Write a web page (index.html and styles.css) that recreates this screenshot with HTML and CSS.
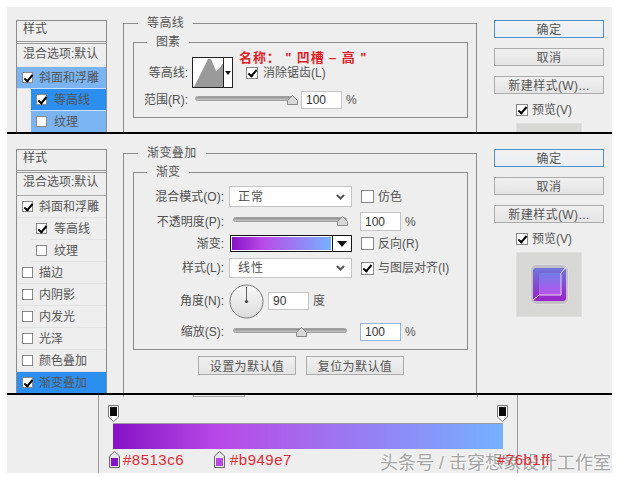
FILE: index.html
```html
<!DOCTYPE html>
<html lang="zh-CN">
<head>
    <meta charset="UTF-8">
    <title>渐变叠加</title>
    <link rel="stylesheet" href="styles.css">
</head>
<body>
    <!-- 等高线 -->
    <div class="strip strip-a">
        <div class="side">
            <div class="side-title">样式</div>
            <div class="side-row plain">混合选项:默认</div>
            <div class="side-row soft"><span class="check on"></span>斜面和浮雕</div>
            <div class="side-row sub active"><span class="check on"></span>等高线</div>
            <div class="side-row sub soft"><span class="check"></span>纹理</div>
        </div>
        <fieldset class="group">
            <legend>等高线</legend>
            <fieldset class="inner">
                <legend>图素</legend>
                <div class="note">名称： " 凹槽 – 高 "</div>
                <div class="row row-contour">
                    <label class="name name-a">等高线:</label>
                    <div class="contour">
                        <svg class="contour-pic" width="30" height="29" viewBox="0 0 30 29">
                            <path d="M1 29 L15 1 L18 1 L23 13 L27 10 L29 6 L30 6 L30 29 Z" fill="#9a9a9a"/>
                        </svg>
                        <div class="contour-arrow"><span class="tri"></span></div>
                    </div>
                    <span class="opt opt-a"><span class="check on"></span>消除锯齿(L)</span>
                </div>
                <div class="row row-range">
                    <label class="name name-a">范围(R):</label>
                    <div class="slider slider-a">
                        <svg class="thumb" style="left: 93%" width="11" height="10" viewBox="0 0 11 10"><path d="M5.5 .5 L10.5 5.5 V9.5 H.5 V5.5 Z" fill="#d8d8d8" stroke="#888"/></svg>
                    </div>
                    <div class="num num-a">100</div>
                    <span class="pct">%</span>
                </div>
            </fieldset>
        </fieldset>
        <div class="right">
            <div class="btn main-btn">确定</div>
            <div class="btn">取消</div>
            <div class="btn">新建样式(W)...</div>
            <div class="preview-opt"><span class="check on"></span>预览(V)</div>
            <div class="preview"></div>
        </div>
    </div>
    <div class="rule"></div>

    <!-- 渐变叠加 -->
    <div class="strip strip-b">
        <div class="side">
            <div class="side-title">样式</div>
            <div class="side-row plain">混合选项:默认</div>
            <div class="side-row"><span class="check on"></span>斜面和浮雕</div>
            <div class="side-row sub"><span class="check on"></span>等高线</div>
            <div class="side-row sub"><span class="check"></span>纹理</div>
            <div class="side-row"><span class="check"></span>描边</div>
            <div class="side-row"><span class="check"></span>内阴影</div>
            <div class="side-row"><span class="check"></span>内发光</div>
            <div class="side-row"><span class="check"></span>光泽</div>
            <div class="side-row"><span class="check"></span>颜色叠加</div>
            <div class="side-row active"><span class="check on"></span>渐变叠加</div>
        </div>
        <fieldset class="group">
            <legend>渐变叠加</legend>
            <fieldset class="inner inner-b">
                <legend>渐变</legend>
                <div class="row row-1">
                    <label class="name">混合模式(O):</label>
                    <div class="select">正常<svg class="chev" width="9" height="6" viewBox="0 0 9 6"><path d="M1 1 L4.5 4.5 L8 1" fill="none" stroke="#555" stroke-width="2"/></svg></div>
                    <span class="opt"><span class="check"></span>仿色</span>
                </div>
                <div class="row row-2">
                    <label class="name">不透明度(P):</label>
                    <div class="slider">
                        <svg class="thumb" style="left: 92%" width="11" height="10" viewBox="0 0 11 10"><path d="M5.5 .5 L10.5 5.5 V9.5 H.5 V5.5 Z" fill="#d8d8d8" stroke="#888"/></svg>
                    </div>
                    <div class="num">100</div>
                    <span class="pct">%</span>
                </div>
                <div class="row row-3">
                    <label class="name">渐变:</label>
                    <div class="grad-pick">
                        <div class="grad-swatch"></div>
                        <div class="grad-arrow"><span class="tri tri-big"></span></div>
                    </div>
                    <span class="opt"><span class="check"></span>反向(R)</span>
                </div>
                <div class="row row-4">
                    <label class="name">样式(L):</label>
                    <div class="select">线性<svg class="chev" width="9" height="6" viewBox="0 0 9 6"><path d="M1 1 L4.5 4.5 L8 1" fill="none" stroke="#555" stroke-width="2"/></svg></div>
                    <span class="opt"><span class="check on"></span>与图层对齐(I)</span>
                </div>
                <div class="row row-5">
                    <label class="name">角度(N):</label>
                    <svg class="dial" width="35" height="35" viewBox="0 0 35 35">
                        <defs>
                            <linearGradient id="dial-fill" x1="0" y1="0" x2="0" y2="1">
                                <stop offset="0" stop-color="#f8f8f8"/>
                                <stop offset="1" stop-color="#dcdcdc"/>
                            </linearGradient>
                        </defs>
                        <circle cx="17.5" cy="17.5" r="16.5" fill="url(#dial-fill)" stroke="#777"/>
                        <path d="M17.5 3 V17" stroke="#666" stroke-width="1"/>
                        <circle cx="17.5" cy="17.5" r="1.6" fill="#444"/>
                    </svg>
                    <div class="num num-angle">90</div>
                    <span class="pct">度</span>
                </div>
                <div class="row row-6">
                    <label class="name">缩放(S):</label>
                    <div class="slider">
                        <svg class="thumb" style="left: 55%" width="11" height="10" viewBox="0 0 11 10"><path d="M5.5 .5 L10.5 5.5 V9.5 H.5 V5.5 Z" fill="#d8d8d8" stroke="#888"/></svg>
                    </div>
                    <div class="num num-focus">100</div>
                    <span class="pct">%</span>
                </div>
            </fieldset>
            <div class="defaults">
                <div class="btn">设置为默认值</div>
                <div class="btn">复位为默认值</div>
            </div>
        </fieldset>
        <div class="right">
            <div class="btn main-btn">确定</div>
            <div class="btn">取消</div>
            <div class="btn">新建样式(W)...</div>
            <div class="preview-opt"><span class="check on"></span>预览(V)</div>
            <div class="preview">
                <svg width="39" height="41" viewBox="0 0 39 41">
                    <defs>
                        <linearGradient id="face" x1="0" y1="0" x2="0" y2="1">
                            <stop offset="0" stop-color="#6f7ce6"/>
                            <stop offset="1" stop-color="#bd52ee"/>
                        </linearGradient>
                        <linearGradient id="rim" x1="0" y1="0" x2="0" y2="1">
                            <stop offset="0" stop-color="#7076da"/>
                            <stop offset="1" stop-color="#9a22c8"/>
                        </linearGradient>
                    </defs>
                    <rect x=".5" y=".5" width="38" height="40" rx="6" fill="#c4c0c8" stroke="#dedede"/>
                    <rect x="3" y="4" width="33" height="33" rx="3" fill="url(#rim)"/>
                    <rect x="9" y="9" width="22" height="22" fill="url(#face)"/>
                    <path d="M31 9 V31 H9" fill="none" stroke="#e6d4f6" stroke-width="1"/>
                    <path d="M3 36 L9 31 M31 9 L37 2" stroke="#eee" stroke-width="1"/>
                </svg>
            </div>
        </div>
    </div>
    <div class="rule"></div>

    <!-- 色标 -->
    <div class="strip strip-c">
        <span class="stub stub-1"></span>
        <span class="stub stub-2"></span>
        <span class="stub stub-3"></span>
        <div class="stage">
            <div class="stops-top">
                <svg width="11" height="17" viewBox="0 0 11 17"><path d="M.5 .5 H10.5 V12 L5.5 16.5 L.5 12 Z" fill="#fff" stroke="#777"/><rect x="2" y="2" width="7" height="9" fill="#0a0a0a"/></svg>
                <svg width="11" height="17" viewBox="0 0 11 17"><path d="M.5 .5 H10.5 V12 L5.5 16.5 L.5 12 Z" fill="#fff" stroke="#777"/><rect x="2" y="2" width="7" height="9" fill="#0a0a0a"/></svg>
            </div>
            <div class="bar"></div>
            <div class="stops-bottom">
                <div class="stop stop-1">
                    <svg width="11" height="17" viewBox="0 0 11 17"><path d="M.5 16.5 H10.5 V5 L5.5 .5 L.5 5 Z" fill="#e8e8e8" stroke="#666"/><rect x="2" y="7" width="7" height="8" fill="#8513c6"/></svg>
                    <span class="code">#8513c6</span>
                </div>
                <div class="stop stop-2">
                    <svg width="11" height="17" viewBox="0 0 11 17"><path d="M.5 16.5 H10.5 V5 L5.5 .5 L.5 5 Z" fill="#e8e8e8" stroke="#666"/><rect x="2" y="7" width="7" height="8" fill="#b949e7"/></svg>
                    <span class="code">#b949e7</span>
                </div>
                <div class="stop stop-3">
                    <svg width="11" height="17" viewBox="0 0 11 17"><path d="M.5 16.5 H10.5 V5 L5.5 .5 L.5 5 Z" fill="#e8e8e8" stroke="#666"/><rect x="2" y="7" width="7" height="8" fill="#76b1ff"/></svg>
                    <span class="code">#76b1ff</span>
                </div>
            </div>
        </div>
        <div class="watermark">头条号 / 击穿想象设计工作室</div>
    </div>
</body>
</html>
```

FILE: styles.css
```css
:root {
    --panel: #eeeeee;
    --line: #8c8c8c;
    --soft-blue: #7ab4f2;
    --blue: #2c8ff0;
    --text: #505050;
}

body {
    margin: 0;
    padding: 7px 0 0 7px;
    background: #fff;
    color: var(--text);
    font-family: "Liberation Sans", "Noto Sans CJK SC", sans-serif;
    font-size: 12px;
    line-height: 16px;
}

.strip {
    width: 605px;
    padding-left: 9px;
    box-sizing: border-box;
    background: var(--panel);
    display: flex;
    align-items: flex-start;
    overflow: hidden;
    position: relative;
}

.strip-a { height: 125px; }
.strip-b { height: 259px; }
.strip-c { height: 78px; overflow: visible; }

.rule {
    width: 605px;
    height: 2px;
    background: #000;
}

/* 左边的样式列表 */
.side {
    width: 91px;
    box-sizing: border-box;
    flex: none;
    border: 1px solid var(--line);
    border-bottom: none;
}

.strip-a .side, .strip-a .right { margin-top: 13px; }
.strip-b .side, .strip-b .right { margin-top: 15px; }

.side-title {
    height: 20px;
    padding-left: 6px;
    line-height: 16px;
    border-bottom: 3px double #999;
}

.side-row {
    height: 22px;
    box-sizing: border-box;
    display: flex;
    align-items: center;
    padding-left: 5px;
    border-bottom: 1px solid #e2e2e2;
    color: #555;
    white-space: nowrap;
}

.side-row.plain {
    height: 23px;
    padding: 0 0 4px 6px;
    border-bottom: 1px solid #aaa;
}

.strip-a .side-row.plain { border-bottom: none; }

.side-row.sub { margin-left: 14px; }
.side-row.soft { background: var(--soft-blue); border-bottom-color: #cfe3f8; }
.side-row.active { background: var(--blue); border-bottom-color: #cfe3f8; }

.side-row .check {
    width: 11px;
    height: 11px;
    margin-right: 6px;
}

.side-row.sub .check { margin-right: 7px; }

.check {
    display: inline-block;
    flex: none;
    width: 12px;
    height: 12px;
    box-sizing: border-box;
    border: 1px solid #888;
    background: #fff;
    position: relative;
}

.check.on::after {
    content: "";
    position: absolute;
    left: 3px;
    top: 0;
    width: 3px;
    height: 7px;
    border-right: 2px solid #000;
    border-bottom: 2px solid #000;
    transform: rotate(40deg);
}

/* 分组框 */
.group {
    flex: none;
    width: 354px;
    height: 300px;
    box-sizing: border-box;
    margin: 0 0 0 16px;
    padding: 3px 8px 0 9px;
    border: 1px solid var(--line);
    min-width: 0;
}

.strip-a .group { margin-top: 8px; }
.strip-b .group { margin-top: 11px; }

.group > legend {
    margin-left: 5px;
    padding: 0 9px;
    color: #555;
    letter-spacing: .4px;
}

.inner {
    margin: 0;
    padding: 7px 0 8px;
    border: 1px solid var(--line);
    min-width: 0;
    position: relative;
}

.inner-b { padding-top: 6px; }

.inner legend {
    margin-left: 13px;
    padding: 0 9px;
    color: #555;
}

.note {
    position: absolute;
    left: 105px;
    top: 0;
    color: #dd1f2a;
    font-size: 13px;
    font-weight: bold;
    letter-spacing: .9px;
    white-space: pre;
}

.row {
    display: flex;
    align-items: center;
}

.name {
    flex: none;
    width: 90px;
    margin-right: 5px;
    text-align: right;
    white-space: nowrap;
}

.name-a {
    width: 54px;
    margin-right: 4px;
}

.row-contour { height: 31px; }
.row-range { height: 18px; margin-top: 3px; }
.row-1 { height: 21px; }
.row-2 { height: 19px; margin-top: 5px; }
.row-3 { height: 17px; margin-top: 4px; }
.row-4 { height: 20px; margin-top: 6px; }
.row-5 { height: 34px; margin-top: 6px; }
.row-6 { height: 18px; margin-top: 5px; }

.contour {
    flex: none;
    width: 41px;
    height: 31px;
    box-sizing: border-box;
    border: 1px solid #222;
    background: #fff;
    display: flex;
}

.contour-pic { flex: none; }

.contour-arrow {
    flex: 1;
    border-left: 1px solid #222;
    display: flex;
    align-items: center;
    justify-content: center;
}

.tri {
    width: 0;
    height: 0;
    border-left: 3px solid transparent;
    border-right: 3px solid transparent;
    border-top: 4px solid #111;
}

.tri-big {
    border-left-width: 5px;
    border-right-width: 5px;
    border-top-width: 6px;
}

.opt {
    display: flex;
    align-items: center;
    margin-left: 9px;
    white-space: nowrap;
    color: #555;
}

.opt .check {
    width: 13px;
    height: 13px;
    margin-right: 4px;
}

.opt-a { margin-left: 13px; }
.opt-a .check { width: 12px; height: 12px; margin-right: 5px; }

.select {
    flex: none;
    width: 123px;
    height: 100%;
    box-sizing: border-box;
    border: 1px solid #c4c4c4;
    background: #fff;
    padding-left: 8px;
    display: flex;
    align-items: center;
    justify-content: space-between;
    padding-right: 6px;
    letter-spacing: 1px;
}

.slider {
    flex: none;
    width: 114px;
    height: 5px;
    margin: 5px 13px 0 4px;
    align-self: flex-start;
    background: linear-gradient(#8e8e8e, #c8c8c8);
    border: 1px solid #a0a0a0;
    box-sizing: border-box;
    border-radius: 3px;
    position: relative;
}

.slider-a {
    width: 100px;
    margin: 5px 6px 0 3px;
}

.thumb {
    position: absolute;
    top: -2px;
}

.num {
    flex: none;
    width: 41px;
    height: 100%;
    box-sizing: border-box;
    border: 1px solid #c4c4c4;
    background: #fff;
    padding-left: 4px;
    display: flex;
    align-items: center;
    color: #333;
}

.num-focus { border-color: #8fb4dc; }

.num-angle {
    height: 18px;
    margin-left: 4px;
}

.pct {
    margin-left: 4px;
    color: #555;
}

.dial { flex: none; }

.grad-pick {
    flex: none;
    width: 122px;
    height: 17px;
    margin-left: 1px;
    display: flex;
    box-sizing: border-box;
    border: 1px solid #111;
    background: #fff;
}

.grad-swatch {
    flex: 1;
    margin: 1px;
    background: linear-gradient(90deg, #8513c6 0%, #b949e7 30%, #76b1ff 100%);
}

.grad-arrow {
    flex: none;
    width: 18px;
    border-left: 1px solid #111;
    display: flex;
    align-items: center;
    justify-content: center;
}

.defaults {
    display: flex;
    justify-content: center;
    gap: 10px;
    margin-top: 6px;
    margin-left: 1px;
}

.defaults .btn {
    width: 98px;
    height: 19px;
    margin: 0;
}

/* 右边按钮 */
.right {
    flex: none;
    width: 110px;
    margin-left: 17px;
}

.btn {
    height: 18px;
    box-sizing: border-box;
    border: 1px solid #ababab;
    background: linear-gradient(#f0f0f0, #e4e4e4);
    margin-bottom: 10px;
    padding-top: 2px;
    display: flex;
    align-items: center;
    justify-content: center;
    color: #555;
    letter-spacing: .4px;
    white-space: nowrap;
}

.main-btn {
    border-color: #4f8fc8;
    background: linear-gradient(#f2f2f2, #e8eef2);
}

.preview-opt {
    display: flex;
    align-items: center;
    margin: -1px 0 0 22px;
    height: 14px;
    color: #555;
    white-space: nowrap;
}

.preview-opt .check { margin-right: 4px; }

.preview {
    width: 66px;
    height: 65px;
    margin: 6px 0 0 22px;
    background: #d8d8d6;
    border: 1px solid #dfdfdf;
    box-sizing: border-box;
    display: flex;
    align-items: center;
    justify-content: center;
}

/* 色标 */
.stage {
    flex: none;
    width: 420px;
    height: 78px;
    box-sizing: border-box;
    margin-left: 82px;
    padding: 10px 0 0 14px;
    border-left: 1px solid #999;
    border-right: 1px solid #999;
}

.stops-top {
    width: 400px;
    margin-left: -5px;
    height: 17px;
    display: flex;
    justify-content: space-between;
}

.bar {
    width: 390px;
    height: 26px;
    margin-top: 1px;
    background: linear-gradient(90deg, #8513c6 0%, #b949e7 27%, #76b1ff 100%);
    border-top: 1px solid #999;
    box-sizing: border-box;
}

.stops-bottom {
    display: flex;
    margin: 2px 0 0 -4px;
    height: 17px;
}

.stop {
    flex: none;
    display: flex;
    align-items: center;
    gap: 3px;
}

.stop-1 { width: 105px; }
.stop-2 { width: 283px; gap: 5px; }
.stop-3 { width: 20px; gap: 0; }

.code {
    color: #dc2b33;
    font-size: 15px;
    letter-spacing: .5px;
    white-space: nowrap;
}

.stop-3 .code {
    position: relative;
    z-index: 1;
}

.watermark {
    position: absolute;
    left: 373px;
    top: 57px;
    font-size: 18px;
    line-height: 22px;
    color: #a4a4a4;
    white-space: nowrap;
    text-shadow: 0 0 2px #fff, 0 0 2px #fff;
}

.stub {
    position: absolute;
    top: 0;
    height: 2px;
    width: 1px;
    background: #999;
}

.stub-1 { left: 116px; }
.stub-2 { left: 470px; }

.stub-3 {
    left: 186px;
    width: 52px;
    box-sizing: border-box;
    background: none;
    border: 1px solid #aaa;
    border-top: none;
}
```
